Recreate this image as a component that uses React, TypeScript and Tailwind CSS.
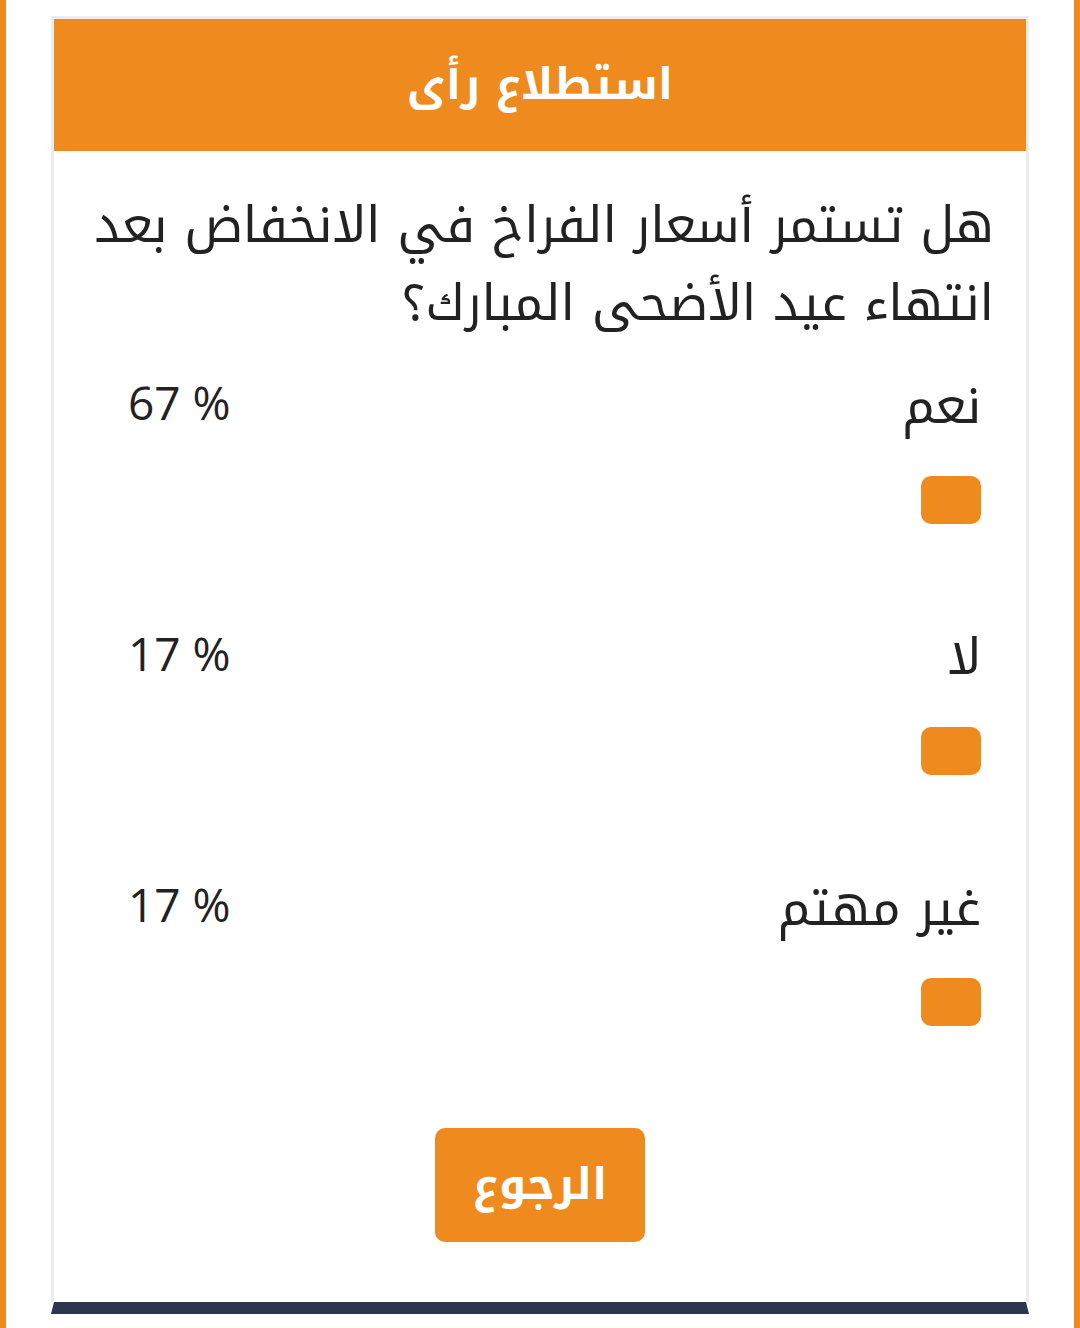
import React from 'react';

const options = [
  { label: 'نعم', percent: '67 %' },
  { label: 'لا', percent: '17 %' },
  { label: 'غير مهتم', percent: '17 %' },
];

const arabic = { fontFamily: '"Noto Kufi Arabic", "Noto Sans Arabic", "DejaVu Sans", sans-serif' };

const App: React.FC = () => {
  return (
    <div className="w-full h-[1328px] bg-white border-x-[6px] border-[#ef8b1e] overflow-hidden" dir="rtl" style={arabic}>
      <div className="mx-[45px] mt-4 flex flex-col">
        <div className="border-x-[3px] border-t-[3px] border-[#ececec] flex flex-col">
          {/* header */}
          <div className="h-[132px] bg-[#ef8b1e] flex items-center justify-center">
            <h2 className="text-white text-[44px] font-bold">استطلاع رأى</h2>
          </div>

          {/* question */}
          <div className="pr-[32px] pl-[30px] pt-[36px] text-[#222] text-[50px] leading-[78px]">
            هل تستمر أسعار الفراخ في الانخفاض بعد انتهاء عيد الأضحى المبارك؟
          </div>

          {/* options */}
          <div className="flex flex-col mt-[32px]">
            {options.map((opt, i) => (
              <div key={i} className="h-[251px] pr-[45px] pl-[74px] flex flex-col">
                <div className="flex justify-between items-start">
                  <span className="text-[#222] text-[50px] leading-[64px]">{opt.label}</span>
                  <span className="text-[#222] text-[46px] leading-[54px]" dir="ltr" style={{ fontFamily: '"Open Sans", "Noto Sans", sans-serif' }}>
                    {opt.percent}
                  </span>
                </div>
                <div className="mt-[37px] w-[60px] h-[48px] rounded-[10px] bg-[#ef8b1e]" />
              </div>
            ))}
          </div>

          {/* back button */}
          <div className="flex justify-center pb-[60px]">
            <button className="w-[210px] h-[114px] rounded-[10px] bg-[#ef8b1e] text-white text-[44px] font-bold">
              الرجوع
            </button>
          </div>
        </div>
        <div className="h-3 bg-[#2b3650] [clip-path:polygon(3px_0,calc(100%-3px)_0,100%_100%,0_100%)]" />
      </div>
    </div>
  );
};

export default App;
